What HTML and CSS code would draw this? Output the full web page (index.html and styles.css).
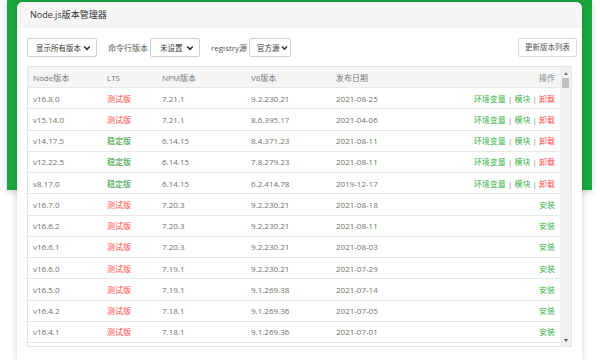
FILE: index.html
```html
<!DOCTYPE html>
<html lang="zh-CN">

<head>
    <meta charset="UTF-8">
    <meta name="viewport" content="width=device-width, initial-scale=1.0">
    <title>Node.js版本管理器</title>
    <link rel="stylesheet" href="styles.css">
</head>

<body>
    <div class="app">
        <div class="panel">
            <div class="panel-head">Node.js版本管理器</div>
            <div class="panel-body">
                <div class="toolbar">
                    <div class="filters">
                        <div class="select sel-all">
                            <span>显示所有版本</span>
                            <svg class="chev" width="8" height="6" viewBox="0 0 8 6"><path d="M1.2 1.4 L4 4.3 L6.8 1.4" fill="none" stroke="#333" stroke-width="1.5"/></svg>
                        </div>
                        <span class="label">命令行版本</span>
                        <div class="select sel-cli">
                            <span>未设置</span>
                            <svg class="chev" width="8" height="6" viewBox="0 0 8 6"><path d="M1.2 1.4 L4 4.3 L6.8 1.4" fill="none" stroke="#333" stroke-width="1.5"/></svg>
                        </div>
                        <span class="label">registry源</span>
                        <div class="select sel-reg">
                            <span>官方源</span>
                            <svg class="chev" width="7" height="6" viewBox="0 0 7 6"><path d="M1 1.4 L3.5 4.2 L6 1.4" fill="none" stroke="#333" stroke-width="1.5"/></svg>
                        </div>
                    </div>
                    <div class="btn">更新版本列表</div>
                </div>

                <div class="table-wrap">
                    <div class="table-scroll">
                        <table class="versions">
                            <colgroup>
                                <col class="c-node">
                                <col class="c-lts">
                                <col class="c-npm">
                                <col class="c-v8">
                                <col class="c-date">
                                <col>
                            </colgroup>
                            <thead>
                                <tr>
                                    <th>Node版本</th>
                                    <th>LTS</th>
                                    <th>NPM版本</th>
                                    <th>V8版本</th>
                                    <th>发布日期</th>
                                    <th class="op">操作</th>
                                </tr>
                            </thead>
                            <tbody>
                                <tr><td>v16.8.0</td><td class="beta">测试版</td><td>7.21.1</td><td>9.2.230.21</td><td>2021-08-25</td><td class="op"><span class="ok">环境变量</span> | <span class="ok">模块</span> | <span class="del">卸载</span></td></tr>
                                <tr><td>v15.14.0</td><td class="beta">测试版</td><td>7.21.1</td><td>8.6.395.17</td><td>2021-04-06</td><td class="op"><span class="ok">环境变量</span> | <span class="ok">模块</span> | <span class="del">卸载</span></td></tr>
                                <tr><td>v14.17.5</td><td class="stable">稳定版</td><td>6.14.15</td><td>8.4.371.23</td><td>2021-08-11</td><td class="op"><span class="ok">环境变量</span> | <span class="ok">模块</span> | <span class="del">卸载</span></td></tr>
                                <tr><td>v12.22.5</td><td class="stable">稳定版</td><td>6.14.15</td><td>7.8.279.23</td><td>2021-08-11</td><td class="op"><span class="ok">环境变量</span> | <span class="ok">模块</span> | <span class="del">卸载</span></td></tr>
                                <tr><td>v8.17.0</td><td class="stable">稳定版</td><td>6.14.15</td><td>6.2.414.78</td><td>2019-12-17</td><td class="op"><span class="ok">环境变量</span> | <span class="ok">模块</span> | <span class="del">卸载</span></td></tr>
                                <tr><td>v16.7.0</td><td class="beta">测试版</td><td>7.20.3</td><td>9.2.230.21</td><td>2021-08-18</td><td class="op"><span class="ok">安装</span></td></tr>
                                <tr><td>v16.6.2</td><td class="beta">测试版</td><td>7.20.3</td><td>9.2.230.21</td><td>2021-08-11</td><td class="op"><span class="ok">安装</span></td></tr>
                                <tr><td>v16.6.1</td><td class="beta">测试版</td><td>7.20.3</td><td>9.2.230.21</td><td>2021-08-03</td><td class="op"><span class="ok">安装</span></td></tr>
                                <tr><td>v16.6.0</td><td class="beta">测试版</td><td>7.19.1</td><td>9.2.230.21</td><td>2021-07-29</td><td class="op"><span class="ok">安装</span></td></tr>
                                <tr><td>v16.5.0</td><td class="beta">测试版</td><td>7.19.1</td><td>9.1.269.38</td><td>2021-07-14</td><td class="op"><span class="ok">安装</span></td></tr>
                                <tr><td>v16.4.2</td><td class="beta">测试版</td><td>7.18.1</td><td>9.1.269.36</td><td>2021-07-05</td><td class="op"><span class="ok">安装</span></td></tr>
                                <tr><td>v16.4.1</td><td class="beta">测试版</td><td>7.18.1</td><td>9.1.269.36</td><td>2021-07-01</td><td class="op"><span class="ok">安装</span></td></tr>
                            </tbody>
                        </table>
                    </div>
                    <div class="scrollbar">
                        <span class="arrow up"></span>
                        <span class="thumb"></span>
                        <span class="track"></span>
                        <span class="arrow down"></span>
                    </div>
                </div>
            </div>
        </div>
    </div>
</body>

</html>
```

FILE: styles.css
```css
html,
body {
    margin: 0;
    height: 360px;
    overflow: hidden;
    background-color: #fff;
}

body {
    font-family: "Open Sans", "Noto Sans CJK SC", sans-serif;
    font-size: 8px;
    color: #666;
}

.app {
    margin-left: 7px;
    width: 565px;
    height: 188px;
    padding: 2px 10px 0;
    background-color: #1aa83e;
    box-shadow: 0 2px 6px rgba(0, 0, 0, 0.18);
}

.panel {
    height: 358px;
    background-color: #fff;
    border-radius: 6px 6px 0 0;
    box-shadow: 0 0 6px rgba(0, 0, 0, 0.2);
    overflow: hidden;
}

.panel-head {
    height: 26px;
    line-height: 26px;
    padding-left: 13px;
    background-color: #f5f5f5;
    font-size: 9px;
    color: #333;
}

.panel-body {
    padding: 10px 5px 0 10px;
}

.toolbar {
    display: flex;
    justify-content: space-between;
    height: 19px;
}

.filters {
    display: flex;
    align-items: center;
}

.select {
    box-sizing: border-box;
    height: 19px;
    display: flex;
    align-items: center;
    justify-content: space-between;
    flex-shrink: 0;
    white-space: nowrap;
    border: 1px solid #d0d0d0;
    border-radius: 2px;
    font-size: 7.5px;
    color: #333;
    background-color: #fff;
}

.sel-all {
    width: 70px;
    padding: 0 5px 0 8px;
}

.sel-cli {
    width: 50px;
    padding: 0 5px 0 9px;
}

.sel-reg {
    width: 42px;
    padding: 0 2px 0 7px;
}

.label {
    margin: 0 2px 0 11px;
    white-space: nowrap;
    color: #555;
}

.btn {
    box-sizing: border-box;
    width: 59px;
    height: 19px;
    line-height: 17px;
    text-align: center;
    border: 1px solid #d8d8d8;
    border-radius: 2px;
    font-size: 7.5px;
    color: #555;
}

.table-wrap {
    display: flex;
    height: 281px;
    box-sizing: border-box;
    margin: 9px 5px 0 0;
    border: 1px solid #e4e4e4;
}

.table-scroll {
    flex: 1;
    overflow: hidden;
}

.versions {
    width: 100%;
    table-layout: fixed;
    border-collapse: collapse;
}

.c-node {
    width: 74px;
}

.c-lts {
    width: 55px;
}

.c-npm {
    width: 89px;
}

.c-v8 {
    width: 85px;
}

.c-date {
    width: 120px;
}

.versions th,
.versions td {
    padding: 0 0 0 5px;
    text-align: left;
    white-space: nowrap;
    font-weight: normal;
    border-bottom: 1px solid #e8e8e8;
}

.versions th {
    height: 20px;
    background-color: #f5f5f5;
    color: #777;
}

.versions td {
    height: 20.25px;
    color: #707070;
}

.versions .op {
    text-align: right;
    padding-right: 5px;
    color: #888;
}

.versions .beta,
.del {
    color: #ff4a4a;
}

.versions .stable {
    color: #25952f;
}

.ok {
    color: #3bb24a;
}

.scrollbar {
    width: 11px;
    display: flex;
    flex-direction: column;
    align-items: center;
    background-color: #f1f1f1;
}

.arrow {
    width: 0;
    height: 0;
    border-left: 2.5px solid transparent;
    border-right: 2.5px solid transparent;
}

.up {
    margin-top: 5px;
    border-bottom: 3px solid #777;
}

.down {
    margin-bottom: 4px;
    border-top: 3px solid #555;
}

.thumb {
    margin-top: 3px;
    width: 7px;
    height: 10px;
    background-color: #c1c1c1;
}

.track {
    flex: 1;
}
```
